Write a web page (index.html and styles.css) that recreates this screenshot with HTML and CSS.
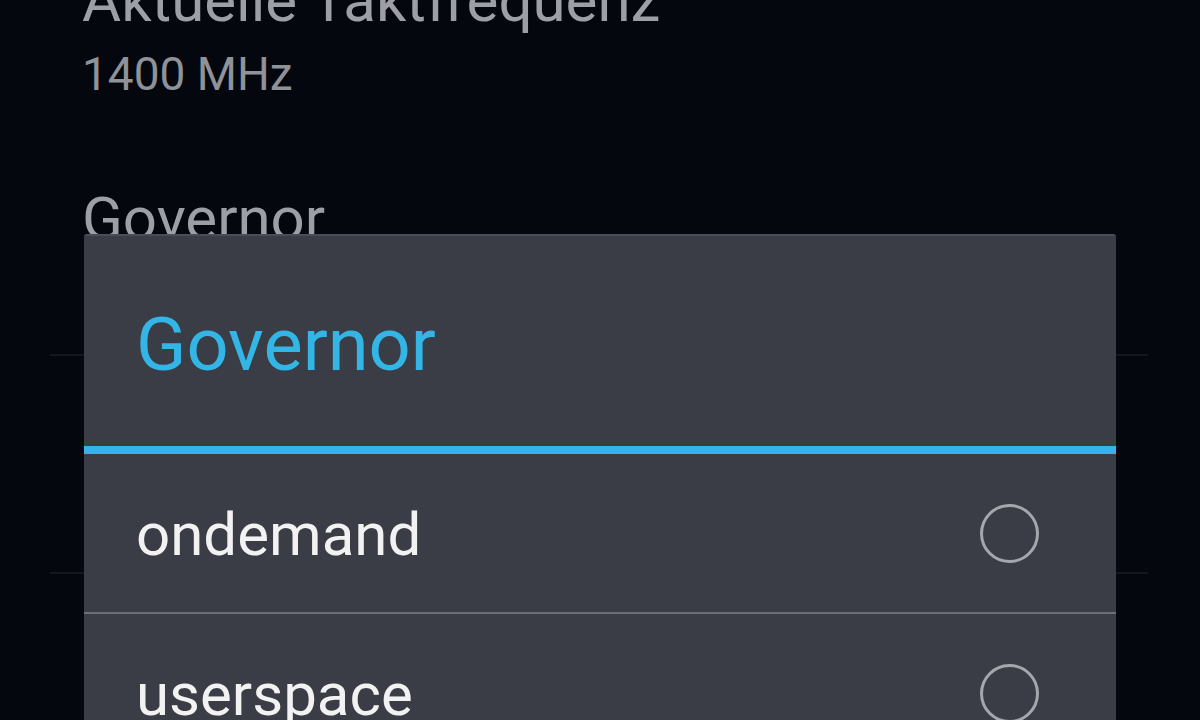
FILE: index.html
```html
<!DOCTYPE html>
<html lang="de">
<head>
    <meta charset="UTF-8">
    <meta name="viewport" content="width=device-width, initial-scale=1.0">
    <title>Governor</title>
    <link rel="stylesheet" href="styles.css">
</head>
<body>
    <div class="prefs">
        <div class="pref first">
            <div class="pref-title">Aktuelle Taktfrequenz</div>
            <div class="pref-summary">1400 MHz</div>
        </div>
        <div class="pref governor">
            <div class="pref-title">Governor</div>
        </div>
        <div class="divider"></div>
        <div class="pref hidden"></div>
        <div class="divider"></div>
    </div>

    <div class="dialog">
        <div class="dialog-title">Governor</div>
        <div class="dialog-bar"></div>
        <div class="choice">
            <span class="choice-label">ondemand</span>
            <span class="radio"></span>
        </div>
        <div class="choice">
            <span class="choice-label">userspace</span>
            <span class="radio"></span>
        </div>
    </div>
</body>
</html>
```

FILE: styles.css
```css
html, body {
    margin: 0;
    height: 100%;
    overflow: hidden;
}
body {
    font-family: Roboto, 'Noto Sans', Arial, sans-serif;
    background-color: #05070f;
    position: relative;
}
.prefs {
    padding-left: 82px;
    margin-top: -29px;
}
.pref-title {
    font-size: 60px;
    line-height: 60px;
    color: #9c9fa5;
}
.pref-summary {
    margin-top: 20px;
    font-size: 46px;
    line-height: 46px;
    color: #8f9298;
}
.pref.governor {
    padding-top: 92px;
    padding-bottom: 105px;
}
.pref.hidden {
    height: 216px;
}
.divider {
    height: 2px;
    margin-left: -32px;
    margin-right: 52px;
    background: #141720;
}
.dialog {
    position: absolute;
    left: 84px;
    top: 234px;
    width: 1032px;
    height: 600px;
    background: #3a3d45;
    border-top: 2px solid #4a4d55;
    border-radius: 3px 3px 0 0;
    box-sizing: border-box;
}
.dialog-title {
    height: 210px;
    box-sizing: border-box;
    padding: 72px 0 0 52px;
    font-size: 74px;
    line-height: 74px;
    color: #33b5e5;
}
.dialog-bar {
    height: 8px;
    background: #33b5e5;
}
.choice {
    height: 160px;
    display: flex;
    align-items: center;
    justify-content: space-between;
    padding: 4px 77px 0 52px;
    box-sizing: border-box;
    border-bottom: 2px solid #6b6e75;
}
.choice-label {
    font-size: 60px;
    line-height: 60px;
    color: #f2f2f2;
}
.radio {
    width: 53px;
    height: 53px;
    border: 3px solid #a4a7ac;
    border-radius: 50%;
    margin-top: -4px;
}
```
